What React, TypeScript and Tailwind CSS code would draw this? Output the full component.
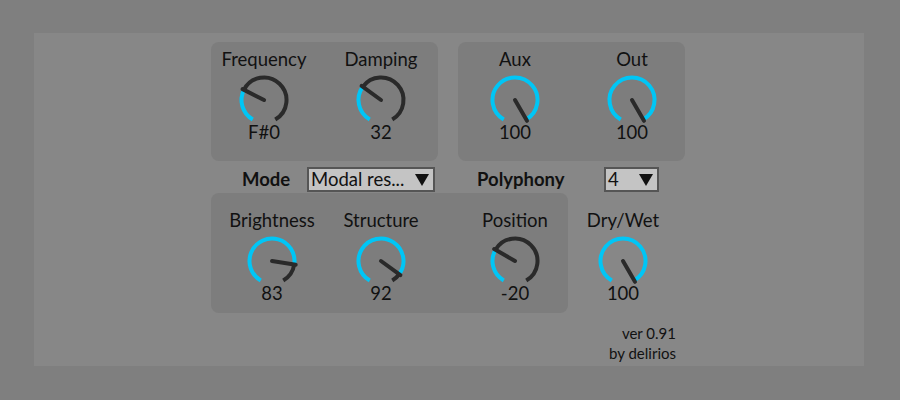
const CYAN = "#00c6f6";
const DARK = "#2a2a2a";

const pt = (a: number, r: number) => {
  const rad = (a * Math.PI) / 180;
  return [27 + r * Math.sin(rad), 27 - r * Math.cos(rad)];
};

const arc = (from: number, to: number, r: number) => {
  const [x1, y1] = pt(from, r);
  const [x2, y2] = pt(to, r);
  const large = to - from > 180 ? 1 : 0;
  return `M ${x1} ${y1} A ${r} ${r} 0 ${large} 1 ${x2} ${y2}`;
};

const Knob = ({ label, value, frac, className = "" }: { label: string; value: string; frac: number; className?: string }) => {
  const a = -150 + frac * 300;
  const [nx, ny] = pt(a, 24);
  return (
    <div className={`flex flex-col items-center w-[106px] ${className}`}>
      <span className="text-[18.5px] leading-[21px] text-[#111]">{label}</span>
      <svg width="54" height="54" viewBox="0 0 54 54" className="mt-[3px]">
        {a > -150 && <path d={arc(-150, a, 22.5)} fill="none" stroke={CYAN} strokeWidth="4" />}
        {a < 150 && <path d={arc(a, 150, 22.5)} fill="none" stroke={DARK} strokeWidth="4" />}
        <line x1="27" y1="27" x2={nx} y2={ny} stroke={DARK} strokeWidth="4" strokeLinecap="round" />
      </svg>
      <span className="text-[18.5px] leading-[21px] text-[#111] -mt-[5px]">{value}</span>
    </div>
  );
};

const Dropdown = ({ text, className = "" }: { text: string; className?: string }) => (
  <div className={`h-[25px] bg-[#c4c4c4] border-2 border-[#555] flex items-center justify-between pl-[2px] pr-[4px] ${className}`}>
    <span className="text-[18.5px] leading-none text-[#111]">{text}</span>
    <svg width="14" height="12" viewBox="0 0 14 12">
      <polygon points="0,0 14,0 7,12" fill="#111" />
    </svg>
  </div>
);

export default function App() {
  return (
    <div className="w-[900px] h-[400px] bg-[#7f7f7f] pt-[33px] pl-[34px]" style={{ fontFamily: "Lato, 'Noto Sans', sans-serif" }}>
      <div className="w-[830px] h-[333px] bg-[#878787] pt-[9px] pl-[177px]">
        <div className="flex gap-[20px]">
          <div className="w-[227px] h-[119px] rounded-[8px] bg-[#7d7d7d] flex pt-[7px]">
            <Knob label="Frequency" value="F#0" frac={0.29} />
            <Knob label="Damping" value="32" frac={0.32} className="ml-[11px]" />
          </div>
          <div className="w-[227px] h-[119px] rounded-[8px] bg-[#7d7d7d] flex pt-[7px] pl-[4px]">
            <Knob label="Aux" value="100" frac={1} />
            <Knob label="Out" value="100" frac={1} className="ml-[11px]" />
          </div>
        </div>
        <div className="flex items-center mt-[6px] h-[25px]">
          <span className="ml-[31px] w-[65px] font-bold text-[18.5px] leading-none text-[#111]">Mode</span>
          <Dropdown text="Modal res..." className="w-[128px]" />
          <span className="ml-[42px] w-[127px] font-bold text-[18.5px] leading-none text-[#111]">Polyphony</span>
          <Dropdown text="4" className="w-[55px]" />
        </div>
        <div className="flex mt-[1px]">
          <div className="w-[357px] h-[120px] rounded-[8px] bg-[#7d7d7d] flex pt-[17px] pl-[8px]">
            <Knob label="Brightness" value="83" frac={0.83} />
            <Knob label="Structure" value="92" frac={0.92} className="ml-[3px]" />
            <Knob label="Position" value="-20" frac={0.3} className="ml-[28px]" />
          </div>
          <div className="flex flex-col items-end">
            <Knob label="Dry/Wet" value="100" frac={1} className="mt-[17px] ml-[2px]" />
            <div className="mt-[19px] text-right text-[15px] leading-[20px] text-[#111]">
              <div>ver 0.91</div>
              <div>by delirios</div>
            </div>
          </div>
        </div>
      </div>
    </div>
  );
}
